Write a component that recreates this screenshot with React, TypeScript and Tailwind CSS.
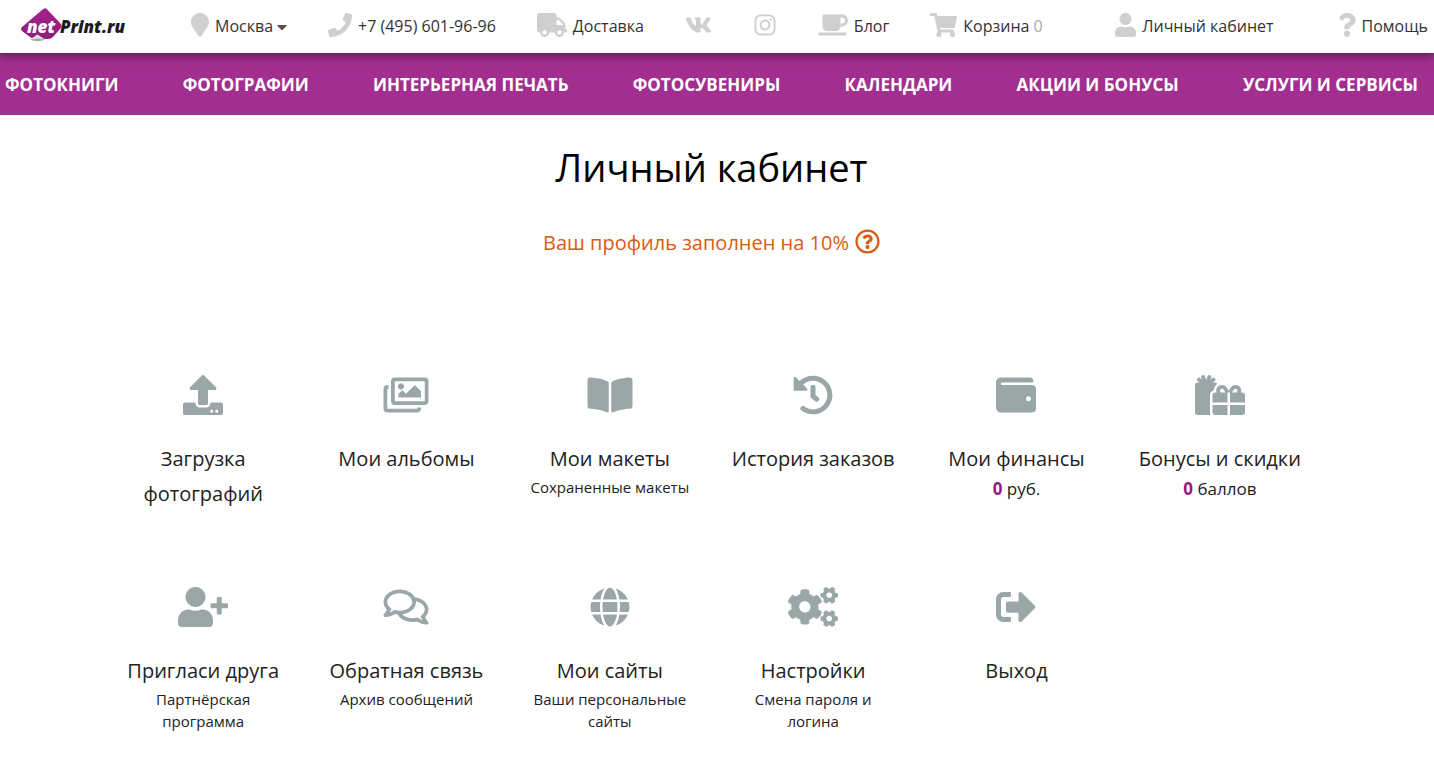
import type { ReactNode } from "react";
import type { IconType } from "react-icons";
import {
  FaBookOpen,
  FaCaretDown,
  FaCoffee,
  FaCogs,
  FaGifts,
  FaGlobe,
  FaHistory,
  FaInstagram,
  FaMapMarker,
  FaPhone,
  FaQuestion,
  FaRegComments,
  FaRegImages,
  FaRegQuestionCircle,
  FaShoppingCart,
  FaSignOutAlt,
  FaTruck,
  FaUpload,
  FaUser,
  FaUserPlus,
  FaVk,
  FaWallet,
} from "react-icons/fa";

type TopLinkProps = {
  icon: IconType;
  iconWidth: string;
  label: string;
  children?: ReactNode;
};

type Tile = {
  icon: IconType;
  iconWidth: string;
  title: string;
  note?: string;
  amount?: string;
  unit?: string;
};

const MENU = [
  "Фотокниги",
  "Фотографии",
  "Интерьерная печать",
  "Фотосувениры",
  "Календари",
  "Акции и бонусы",
  "Услуги и сервисы",
];

const TILES: Tile[] = [
  { icon: FaUpload, iconWidth: "w-10", title: "Загрузка фотографий" },
  { icon: FaRegImages, iconWidth: "w-[46px]", title: "Мои альбомы" },
  { icon: FaBookOpen, iconWidth: "w-[46px]", title: "Мои макеты", note: "Сохраненные макеты" },
  { icon: FaHistory, iconWidth: "w-10", title: "История заказов" },
  { icon: FaWallet, iconWidth: "w-10", title: "Мои финансы", amount: "0", unit: "руб." },
  { icon: FaGifts, iconWidth: "w-[50px]", title: "Бонусы и скидки", amount: "0", unit: "баллов" },
  { icon: FaUserPlus, iconWidth: "w-[50px]", title: "Пригласи друга", note: "Партнёрская программа" },
  { icon: FaRegComments, iconWidth: "w-[46px]", title: "Обратная связь", note: "Архив сообщений" },
  { icon: FaGlobe, iconWidth: "w-10", title: "Мои сайты", note: "Ваши персональные сайты" },
  { icon: FaCogs, iconWidth: "w-[50px]", title: "Настройки", note: "Смена пароля и логина" },
  { icon: FaSignOutAlt, iconWidth: "w-10", title: "Выход" },
];

function Logo() {
  return (
    <svg className="h-[34px] w-[106px]" viewBox="0 0 106 34" aria-hidden="true">
      <defs>
        <linearGradient id="diamond" x1="0" y1="0" x2="0" y2="1">
          <stop offset="0" stopColor="#a3238e" />
          <stop offset="1" stopColor="#8f1d7c" />
        </linearGradient>
      </defs>
      <path
        d="M23.500 .8 Q25 -.4 26.500 .8 L40 15 Q43 18 40 21 L33 29 Q31 31 28 31 H16 Q12 31 10 29 L2 23 Q0 21 2 19 Z"
        fill="url(#diamond)"
      />
      <path d="M10 31.500 L17.500 26.500 L25 31.500 Q17.500 35 10 31.500 Z" fill="#e4e4e4" />
      <path d="M10 31.500 Q17.500 35 25 31.500 L17.500 30.500 Z" fill="#a8a8a8" />
      <text
        x="7"
        y="25"
        fontSize="17"
        fontWeight="800"
        fontStyle="italic"
        fontFamily="'Open Sans', sans-serif"
        fill="#fff"
      >
        net
      </text>
      <text
        x="40"
        y="25"
        fontSize="17"
        fontWeight="800"
        fontStyle="italic"
        fontFamily="'Open Sans', sans-serif"
        fill="#1c1c1c"
      >
        Print.ru
      </text>
    </svg>
  );
}

function TopLink({ icon: Icon, iconWidth, label, children }: TopLinkProps) {
  return (
    <a href="#" className="flex items-center gap-1.5 whitespace-nowrap">
      <Icon className={`h-6 shrink-0 text-[#cfcfcf] ${iconWidth}`} />
      <span className="pt-0.5">{label}</span>
      {children}
    </a>
  );
}

function Header() {
  return (
    <header className="relative flex h-[53px] items-center bg-white pb-1 pl-5 pr-1.5 text-base text-[#333] shadow-[0_2px_10px_rgba(0,0,0,0.5)]">
      <a href="#" aria-label="netPrint.ru" className="mr-[65px] shrink-0">
        <Logo />
      </a>
      <div className="flex items-center gap-[41px]">
        <button type="button" className="flex items-center gap-1.5">
          <FaMapMarker className="h-6 w-[18px] text-[#cfcfcf]" />
          <span className="pt-0.5">Москва</span>
          <FaCaretDown className="-ml-0.5 mt-1 h-4 w-[10px] text-[#5a4a4a]" />
        </button>
        <TopLink icon={FaPhone} iconWidth="w-6" label="+7 (495) 601-96-96" />
        <TopLink icon={FaTruck} iconWidth="w-[30px]" label="Доставка" />
        <a href="#" aria-label="ВКонтакте">
          <FaVk className="h-6 w-[27px] text-[#cfcfcf]" />
        </a>
        <a href="#" aria-label="Instagram">
          <FaInstagram className="size-6 text-[#cfcfcf]" />
        </a>
        <TopLink icon={FaCoffee} iconWidth="w-[30px]" label="Блог" />
        <TopLink icon={FaShoppingCart} iconWidth="w-[27px]" label="Корзина">
          <span className="-ml-0.5 pt-0.5 text-[#aaa]">0</span>
        </TopLink>
      </div>
      <div className="ml-auto flex items-center gap-16">
        <TopLink icon={FaUser} iconWidth="w-[21px]" label="Личный кабинет" />
        <TopLink icon={FaQuestion} iconWidth="w-[18px]" label="Помощь" />
      </div>
    </header>
  );
}

function MainMenu() {
  return (
    <nav className="flex h-[62px] items-center justify-between bg-[#a22f8f] pl-[5px] pr-4 pt-0.5 text-[17px] font-bold uppercase text-white">
      {MENU.map((item) => (
        <a key={item} href="#" className="whitespace-nowrap">
          {item}
        </a>
      ))}
    </nav>
  );
}

function TileLink({ icon: Icon, iconWidth, title, note, amount, unit }: Tile) {
  return (
    <a href="#" className="flex flex-col items-center px-5 text-center">
      <Icon className={`mb-[26px] h-10 text-[#9ba7a7] ${iconWidth}`} />
      <span className="text-xl/[35px]">{title}</span>
      {note && <span className="text-[15px]/[22px]">{note}</span>}
      {amount && (
        <span className="text-[17px]/[26px]">
          <b className="font-bold text-[#951b81]">{amount}</b> {unit}
        </span>
      )}
    </a>
  );
}

export default function App() {
  return (
    <div className="bg-white font-['Open_Sans',sans-serif] text-[#222]">
      <Header />
      <MainMenu />
      <main className="pr-[11px]">
        <h1 className="pt-[22px] text-center text-[38px]/[60px] text-black">
          Личный кабинет
        </h1>
        <p className="mt-[31px] flex items-center justify-center gap-1.5 text-xl/[30px] text-[#d95b14]">
          Ваш профиль заполнен на 10%
          <button type="button" aria-label="Подсказка" className="pb-1">
            <FaRegQuestionCircle className="size-[25px]" />
          </button>
        </p>
        <div className="mx-auto mt-[117px] grid max-w-[1220px] grid-cols-6 gap-y-[76px] pb-6">
          {TILES.map((tile) => (
            <TileLink key={tile.title} {...tile} />
          ))}
        </div>
      </main>
    </div>
  );
}
